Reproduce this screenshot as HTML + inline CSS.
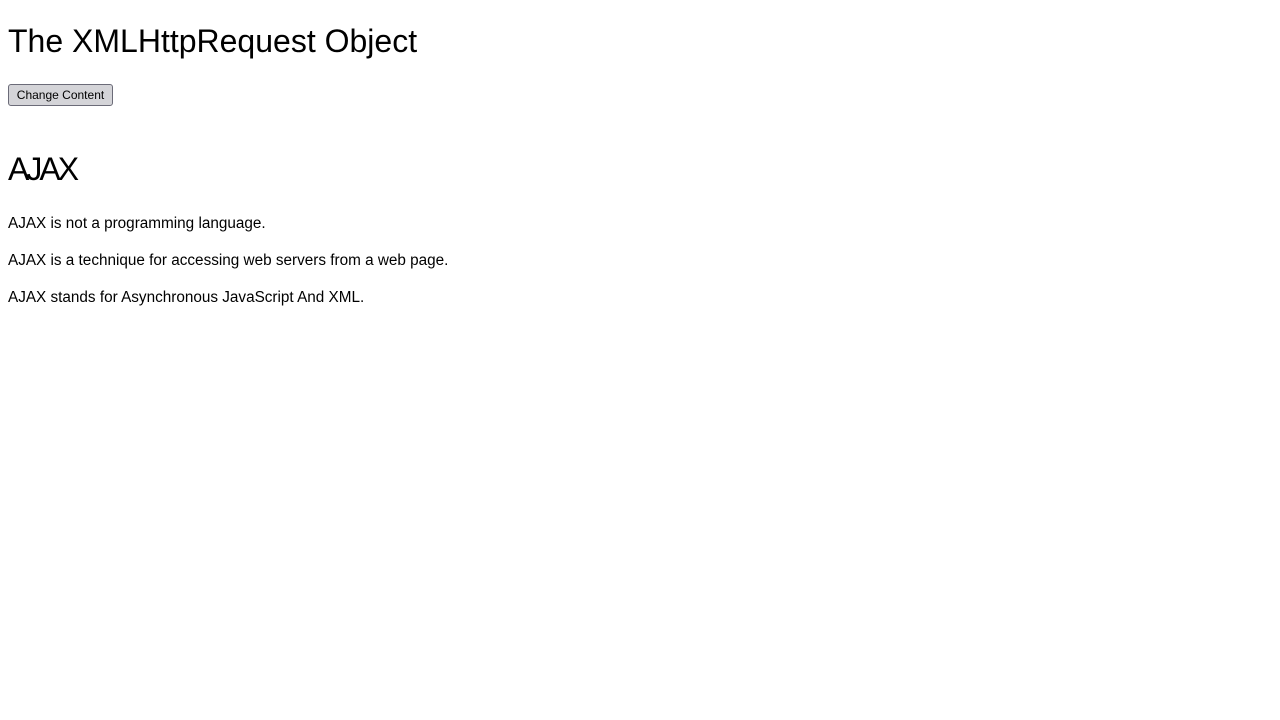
<!DOCTYPE html>
<html><head><style>
body{margin:0;background:#fff;font-family:"WenQuanYi Zen Hei","Liberation Sans",sans-serif;color:#000}
.a{position:absolute;left:8px;white-space:nowrap}
h1{margin:0;font-weight:normal;font-size:32px;line-height:40px}
p{margin:0;font-size:15.3px;line-height:20px}
button{position:absolute;left:8px;top:84px;width:105px;height:22px;padding:0;font:12px "WenQuanYi Zen Hei","Liberation Sans",sans-serif;background:#d4d4d8;border:1px solid #6b6b78;border-radius:3px;color:#000}
</style></head><body>
<h1 class="a" style="top:21px">The XMLHttpRequest Object</h1>
<button>Change Content</button>
<h1 class="a" style="top:149px;letter-spacing:-3px">AJAX</h1>
<p class="a" style="top:214px">AJAX is not a programming language.</p>
<p class="a" style="top:251px">AJAX is a technique for accessing web servers from a web page.</p>
<p class="a" style="top:288px">AJAX stands for Asynchronous JavaScript And XML.</p>
</body></html>
